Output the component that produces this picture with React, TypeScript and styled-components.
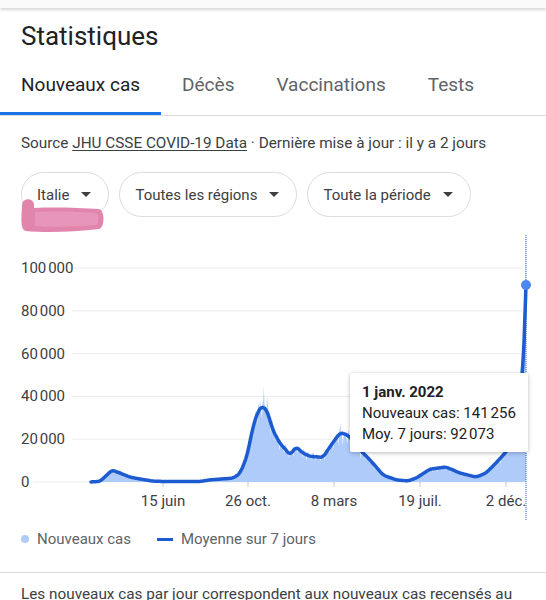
import React from "react";
import styled, { createGlobalStyle } from "styled-components";

const GlobalStyle = createGlobalStyle`
  body {
    margin: 0;
    background: #ffffff;
    font-family: Roboto, "Liberation Sans", Arial, sans-serif;
    color: #202124;
  }
`;

const Page = styled.div`
  width: 546px;
  height: 600px;
  overflow: hidden;
  background: #ffffff;
`;

const TopShadow = styled.div`
  height: 8px;
  background: #fafafa;
  box-shadow: 0 2px 3px rgba(0, 0, 0, 0.16);
`;

const Title = styled.h1`
  margin: 12px 0 0;
  padding-left: 21px;
  font-size: 26px;
  line-height: 32px;
  font-weight: 400;
  color: #202124;
`;

const TabList = styled.div`
  display: flex;
  border-bottom: 1px solid #dadce0;
`;

const Tab = styled.div<{ $active?: boolean }>`
  padding: 5px 21px 0;
  height: 55px;
  line-height: 55px;
  font-size: 19px;
  color: ${({ $active }) => ($active ? "#202124" : "#5f6368")};
  border-bottom: 3px solid ${({ $active }) => ($active ? "#1a73e8" : "transparent")};
`;

const Source = styled.p`
  margin: 17px 0 0;
  padding-left: 21px;
  font-size: 15.3px;
  line-height: 20px;
  color: #3c4043;
`;

const SourceLink = styled.span`
  text-decoration: underline;
  text-underline-offset: 2px;
`;

const ChipRow = styled.div`
  position: relative;
  display: flex;
  gap: 10px;
  margin-top: 19px;
  padding-left: 21px;
`;

const Chip = styled.div`
  display: flex;
  align-items: center;
  gap: 12px;
  height: 43px;
  padding: 0 17px 0 15px;
  border: 1px solid #dadce0;
  border-radius: 23px;
  font-size: 15px;
  color: #3c4043;
`;

const Caret = styled.span`
  width: 0;
  height: 0;
  border-left: 5.5px solid transparent;
  border-right: 5.5px solid transparent;
  border-top: 5.5px solid #3c4043;
`;

const Highlight = styled.svg`
  position: absolute;
  left: 19px;
  top: 24px;
  pointer-events: none;
`;

const ChartWrap = styled.div`
  position: relative;
  margin-top: 8px;
  height: 300px;
`;

const Tooltip = styled.div`
  position: absolute;
  left: 350px;
  top: 148px;
  width: 154px;
  padding: 9px 12px 7px;
  background: #ffffff;
  border-radius: 2px;
  box-shadow: 0 1px 4px rgba(0, 0, 0, 0.28);
  font-size: 15px;
  line-height: 21px;
  color: #202124;
  white-space: nowrap;
`;

const TipDate = styled.div`
  font-weight: 700;
`;

const Legend = styled.div`
  display: flex;
  align-items: center;
  margin-top: 4px;
  padding-left: 21px;
  height: 20px;
  font-size: 15px;
  color: #5f6368;
`;

const LegendItem = styled.div`
  display: flex;
  align-items: center;
  gap: 8px;
  & + & {
    margin-left: 26px;
  }
`;

const Dot = styled.span`
  width: 8px;
  height: 8px;
  border-radius: 50%;
  background: #aecbfa;
`;

const Dash = styled.span`
  width: 16px;
  height: 3px;
  background: #1d5bd0;
`;

const Divider = styled.div`
  margin-top: 23px;
  height: 1px;
  background: #dadce0;
`;

const Note = styled.p`
  margin: 11px 0 0;
  padding-left: 21px;
  font-size: 15.3px;
  line-height: 20px;
  color: #3c4043;
  white-space: nowrap;
`;

// chart geometry, in page coordinates (the svg viewBox starts at page y 225)
const X0 = 91;
const X1 = 526;
const DAYS = 677;
const Y0 = 482;
const PX_PER_CASE = 214 / 100000;

const avgKeys: [number, number][] = [
  [91, 0], [100, 300], [107, 3300], [112, 5600], [120, 4200], [130, 2300],
  [140, 1400], [153, 400], [167, 200], [200, 250], [210, 1000], [233, 1800],
  [240, 4000], [247, 12000], [253, 26000], [258, 33000], [262, 35500],
  [267, 33500], [273, 24000], [280, 18000], [286, 15000], [290, 12500],
  [296, 16500], [303, 13500], [310, 12000], [323, 11500], [330, 16500],
  [340, 23000], [345, 22500], [350, 21000], [360, 15000], [370, 10300],
  [383, 3300], [396, 1000], [408, 500], [416, 1800], [430, 6000], [446, 7000],
  [460, 4200], [476, 2300], [486, 4200], [496, 8900], [506, 14000],
  [516, 22000], [521, 40000], [524, 65000], [526, 92073],
];

function interp(x: number) {
  for (let i = 1; i < avgKeys.length; i++) {
    const [xa, va] = avgKeys[i - 1];
    const [xb, vb] = avgKeys[i];
    if (x <= xb) return va + ((vb - va) * (x - xa)) / (xb - xa);
  }
  return avgKeys[avgKeys.length - 1][1];
}

function rng(seed: number) {
  return () => {
    seed |= 0;
    seed = (seed + 0x6d2b79f5) | 0;
    let t = Math.imul(seed ^ (seed >>> 15), 1 | seed);
    t = (t + Math.imul(t ^ (t >>> 7), 61 | t)) ^ t;
    return ((t ^ (t >>> 14)) >>> 0) / 4294967296;
  };
}

const step = (X1 - X0) / DAYS;
const raw = Array.from({ length: DAYS + 1 }, (_, d) => interp(X0 + d * step));
const avg = raw.map((v, d) => {
  if (d > DAYS - 6) return v;
  let s = 0;
  let n = 0;
  for (let k = d - 4; k <= d + 4; k++) {
    if (k >= 0 && k <= DAYS) {
      s += raw[k];
      n++;
    }
  }
  return s / n;
});

const rand = rng(17);
const weekly = [0.8, 1.03, 1.08, 1.07, 1.06, 1.02, 0.94];
const daily = avg.map((v, d) => {
  if (d === DAYS) return 141256;
  let f = weekly[d % 7] * (1 + (rand() - 0.5) * 0.16);
  if (rand() < 0.03) f *= 1.12;
  return v * f;
});

const px = (d: number) => X0 + d * step;
const py = (v: number) => Y0 - v * PX_PER_CASE;

const linePath =
  "M" + avg.map((v, d) => `${px(d).toFixed(2)},${py(v).toFixed(2)}`).join(" L");
const areaPath =
  `M${X0},${Y0} L` +
  daily.map((v, d) => `${px(d).toFixed(2)},${py(v).toFixed(2)}`).join(" L") +
  ` L${X1},${Y0} Z`;

const yTicks = [100000, 80000, 60000, 40000, 20000, 0];
const fmt = (n: number) => (n === 0 ? "0" : `${n / 1000}\u202F000`);
const xTicks: [number, string][] = [
  [163, "15 juin"],
  [248, "26 oct."],
  [334, "8 mars"],
  [420, "19 juil."],
  [506, "2 déc."],
];

function Chart() {
  return (
    <svg width={546} height={300} viewBox="0 225 546 300">
      <defs>
        <clipPath id="plot">
          <rect x={0} y={236} width={546} height={260} />
        </clipPath>
      </defs>
      {yTicks.map((t) => (
        <g key={t}>
          <line
            x1={t === 0 ? 33 : 72}
            x2={523}
            y1={py(t)}
            y2={py(t)}
            stroke="#ececec"
            strokeWidth={1}
          />
          <text
            x={21}
            y={py(t) + 5}
            fontSize={15}
            fill="#3c4043"
            fontFamily="Roboto, 'Liberation Sans', sans-serif"
          >
            {fmt(t)}
          </text>
        </g>
      ))}
      <path d={areaPath} fill="#aecbfa" clipPath="url(#plot)" />
      {xTicks.map(([x, label]) => (
        <g key={label}>
          <line x1={x} x2={x} y1={Y0} y2={Y0 + 5} stroke="#c8c8c8" />
          <text
            x={x}
            y={506}
            fontSize={15}
            textAnchor="middle"
            fill="#3c4043"
            fontFamily="Roboto, 'Liberation Sans', sans-serif"
          >
            {label}
          </text>
        </g>
      ))}
      <line
        x1={X1}
        x2={X1}
        y1={235}
        y2={520}
        stroke="#6e8fd6"
        strokeWidth={1.5}
        strokeDasharray="1 1"
      />
      <path
        d={linePath}
        fill="none"
        stroke="#1d5bd0"
        strokeWidth={3.5}
        strokeLinejoin="round"
        strokeLinecap="round"
      />
      <circle cx={X1} cy={py(92073)} r={5} fill="#4d87ef" />
    </svg>
  );
}

export default function App() {
  return (
    <Page>
      <GlobalStyle />
      <TopShadow />
      <Title>Statistiques</Title>
      <TabList>
        <Tab $active>Nouveaux cas</Tab>
        <Tab>Décès</Tab>
        <Tab>Vaccinations</Tab>
        <Tab>Tests</Tab>
      </TabList>
      <Source>
        Source <SourceLink>JHU CSSE COVID-19 Data</SourceLink> · Dernière mise à
        jour : il y a 2 jours
      </Source>
      <ChipRow>
        <Chip>
          Italie <Caret />
        </Chip>
        <Chip>
          Toutes les régions <Caret />
        </Chip>
        <Chip>
          Toute la période <Caret />
        </Chip>
        <Highlight width={90} height={40} viewBox="0 0 90 40">
          <path
            d="M3,9 C3,2 14,1 15,8 L15,12 C38,11 60,12 80,13 C86,14 86,32 80,33 C55,36 26,37 7,35 C2,34 2,27 3,9 Z"
            fill="#df78a4"
            opacity={0.9}
          />
          <path
            d="M16,16 C40,15 60,16 78,17 C80,20 80,27 77,29 C55,31 30,31 16,30 Z"
            fill="#eba4c4"
            opacity={0.55}
          />
        </Highlight>
      </ChipRow>
      <ChartWrap>
        <Chart />
        <Tooltip>
          <TipDate>1 janv. 2022</TipDate>
          <div>Nouveaux cas: 141{"\u202F"}256</div>
          <div>Moy. 7 jours: 92{"\u202F"}073</div>
        </Tooltip>
      </ChartWrap>
      <Legend>
        <LegendItem>
          <Dot />
          Nouveaux cas
        </LegendItem>
        <LegendItem>
          <Dash />
          Moyenne sur 7 jours
        </LegendItem>
      </Legend>
      <Divider />
      <Note>
        Les nouveaux cas par jour correspondent aux nouveaux cas recensés au
      </Note>
    </Page>
  );
}
